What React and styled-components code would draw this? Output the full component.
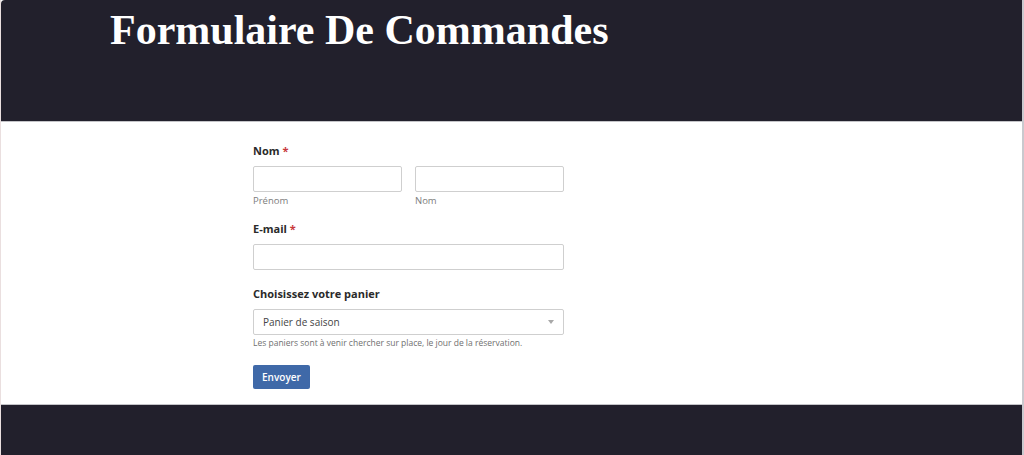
import React from "react";
import styled, { createGlobalStyle } from "styled-components";

const Global = createGlobalStyle`
  html, body { margin: 0; padding: 0; background: #ffffff; }
  body { font-family: "Open Sans", "Noto Sans", sans-serif; }
  * { box-sizing: border-box; }
`;

const Frame = styled.div`
  width: 1024px;
  height: 455px;
  display: flex;
  flex-direction: column;
  border-left: 1px solid #eadfdf;
  border-right: 2px solid #c9c9ce;
  overflow: hidden;
`;

const Header = styled.header`
  height: 122px;
  background: #22202c;
  border-top-left-radius: 4px;
  border-bottom: 1px solid #c4c4c8;
  padding: 6px 0 0 109px;
`;

const Title = styled.h1`
  margin: 0;
  font-family: "Liberation Serif", "DejaVu Serif", serif;
  font-weight: 700;
  font-size: 42px;
  line-height: 48px;
  color: #ffffff;
`;

const Main = styled.main`
  flex: 1;
  padding: 21px 0 0 252px;
`;

const Form = styled.form`
  width: 311px;
  display: flex;
  flex-direction: column;
`;

const Field = styled.div`
  display: flex;
  flex-direction: column;
  margin-bottom: ${(p) => p.$mb || 0}px;
`;

const Label = styled.label`
  font-size: 11px;
  font-weight: 700;
  color: #2a2a2a;
  line-height: 16px;
  margin-bottom: 7px;
`;

const Req = styled.span`
  color: #c8383b;
  margin-left: 3px;
`;

const Row = styled.div`
  display: grid;
  grid-template-columns: 1fr 1fr;
  column-gap: 13px;
`;

const Col = styled.div`
  display: flex;
  flex-direction: column;
`;

const Input = styled.input`
  height: 26px;
  width: 100%;
  border: 1px solid #cfcfcf;
  border-radius: 2px;
  background: #fff;
  outline: none;
`;

const Sub = styled.span`
  font-size: 9.5px;
  color: #7d7d7d;
  line-height: 14px;
  margin-top: 2px;
`;

const SelectBox = styled.div`
  height: 26px;
  border: 1px solid #cfcfcf;
  border-radius: 2px;
  display: flex;
  align-items: center;
  justify-content: space-between;
  padding: 0 9px 0 9px;
  font-size: 10px;
  color: #444;
`;

const Caret = styled.span`
  width: 0;
  height: 0;
  border-left: 3.5px solid transparent;
  border-right: 3.5px solid transparent;
  border-top: 4px solid #a8a8a8;
`;

const Help = styled.span`
  font-size: 8.5px;
  color: #707070;
  line-height: 14px;
  margin-top: 1px;
`;

const Button = styled.button`
  align-self: flex-start;
  height: 24px;
  padding: 0 9px;
  background: #3f69a8;
  color: #fff;
  border: none;
  border-radius: 2px;
  font-family: "Open Sans", "Noto Sans", sans-serif;
  font-size: 10px;
  font-weight: 600;
  margin-top: 15px;
`;

const Footer = styled.footer`
  height: 51px;
  background: #22202c;
  border-top: 1px solid #c4c4c8;
`;

export default function App() {
  return (
    <>
      <Global />
      <Frame>
        <Header>
          <Title>Formulaire De Commandes</Title>
        </Header>
        <Main>
          <Form onSubmit={(e) => e.preventDefault()}>
            <Field $mb={13}>
              <Label>
                Nom<Req>*</Req>
              </Label>
              <Row>
                <Col>
                  <Input />
                  <Sub>Prénom</Sub>
                </Col>
                <Col>
                  <Input />
                  <Sub>Nom</Sub>
                </Col>
              </Row>
            </Field>
            <Field $mb={16}>
              <Label>
                E-mail<Req>*</Req>
              </Label>
              <Input />
            </Field>
            <Field>
              <Label>Choisissez votre panier</Label>
              <SelectBox>
                Panier de saison
                <Caret />
              </SelectBox>
              <Help>
                Les paniers sont à venir chercher sur place, le jour de la réservation.
              </Help>
            </Field>
            <Button type="submit">Envoyer</Button>
          </Form>
        </Main>
        <Footer />
      </Frame>
    </>
  );
}
